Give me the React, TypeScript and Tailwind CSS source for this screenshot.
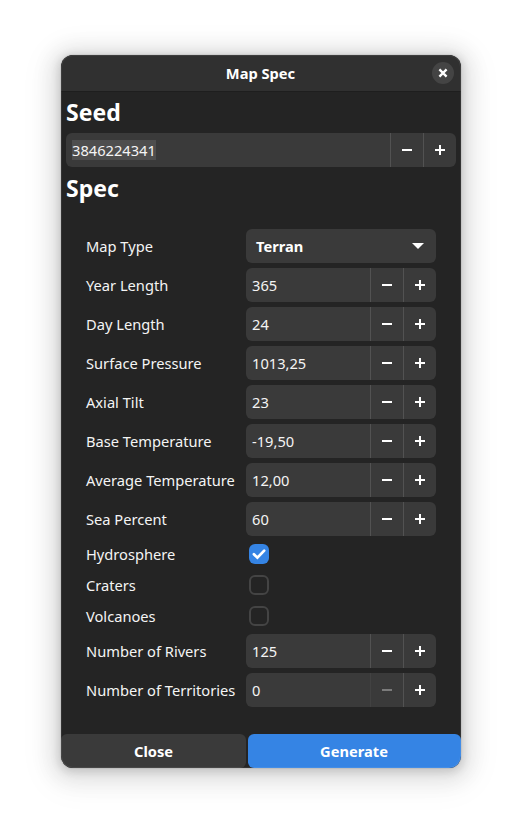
import React from "react";

function Minus() {
  return (
    <svg width="10" height="10" viewBox="0 0 10 10" fill="currentColor">
      <path d="M0 4h10v2H0z" />
    </svg>
  );
}

function Plus() {
  return (
    <svg width="10" height="10" viewBox="0 0 10 10" fill="currentColor">
      <path d="M4 0h2v4h4v2H6v4H4V6H0V4h4z" />
    </svg>
  );
}

type SpinProps = { value: string; selected?: boolean; atMin?: boolean };

function SpinButton({ value, selected, atMin }: SpinProps) {
  return (
    <div className="flex h-[34px] w-full overflow-hidden rounded-md bg-[#3a3a3a]">
      <div className="flex flex-1 items-center pl-1.5">
        <span className={selected ? "bg-[#4e4e4e] leading-5" : "leading-5"}>{value}</span>
      </div>
      <button
        aria-label="Decrease"
        className={
          atMin
            ? "flex w-[33px] items-center justify-center border-l border-[#424242] text-[#7b7b7b]"
            : "flex w-[33px] items-center justify-center border-l border-[#525252] text-white"
        }
      >
        <Minus />
      </button>
      <button
        aria-label="Increase"
        className="flex w-[33px] items-center justify-center border-l border-[#525252] text-white"
      >
        <Plus />
      </button>
    </div>
  );
}

function Check({ checked }: { checked?: boolean }) {
  return checked ? (
    <div className="ml-[3px] flex size-5 items-center justify-center rounded-md bg-[#3584e4]">
      <svg width="14" height="14" viewBox="0 0 14 14" fill="none" stroke="white" strokeWidth="2.7">
        <path d="M1.9 7.3 5.4 10.7 12.2 3.6" strokeLinejoin="miter" strokeLinecap="round" />
      </svg>
    </div>
  ) : (
    <div className="ml-[3px] size-5 rounded-md border-2 border-[#444444]" />
  );
}

function Row({ label, children }: { label: string; children: React.ReactNode }) {
  return (
    <div className="flex min-h-[26px] items-center">
      <div className="w-40 shrink-0 whitespace-nowrap">{label}</div>
      <div className="flex-1">{children}</div>
    </div>
  );
}

export default function App() {
  return (
    <div className="h-[835px] w-[522px] overflow-hidden bg-white pl-[61px] pt-[55px] font-['Noto_Sans',sans-serif] text-[14.667px] leading-5 text-[#f4f4f4]">
      <div className="relative flex h-[713px] w-[400px] flex-col overflow-hidden rounded-xl bg-[#242424] shadow-[0_2px_8px_2px_rgba(0,0,0,0.13),0_3px_20px_10px_rgba(0,0,0,0.09),0_6px_32px_16px_rgba(0,0,0,0.04),0_0_0_1px_rgba(0,0,0,0.05)]">
        <header className="grid h-[37px] shrink-0 grid-cols-[1fr_auto_1fr] items-center border-b border-[#1e1e1e] bg-[#303030] pr-[7px]">
          <span />
          <h1 className="pl-[6px] font-bold text-white">Map Spec</h1>
          <button aria-label="Close window" className="flex size-[22px] items-center justify-center justify-self-end rounded-full bg-[#444444]">
            <svg width="10" height="10" viewBox="0 0 10 10" stroke="white" strokeWidth="2.3">
              <path d="M1.4 1.4 8.6 8.6M8.6 1.4 1.4 8.6" />
            </svg>
          </button>
        </header>
        <main className="flex flex-1 flex-col px-[5px]">
          <h2 className="mt-1 h-[32px] text-[23px] leading-[32px] font-bold text-white">Seed</h2>
          <div className="mt-[5px]">
            <SpinButton value="3846224341" selected />
          </div>
          <h2 className="mt-[5px] h-[32px] text-[23px] leading-[32px] font-bold text-white">Spec</h2>
          <div className="mt-[25px] flex flex-col gap-[5px] px-5">
            <Row label="Map Type">
              <button className="flex h-[34px] w-full items-center justify-between rounded-md bg-[#3a3a3a] pr-3 pl-2.5 font-bold text-white">
                Terran
                <svg width="12" height="6" viewBox="0 0 12 6" fill="currentColor">
                  <path d="M0 0h12L6 6z" />
                </svg>
              </button>
            </Row>
            <Row label="Year Length"><SpinButton value="365" /></Row>
            <Row label="Day Length"><SpinButton value="24" /></Row>
            <Row label="Surface Pressure"><SpinButton value="1013,25" /></Row>
            <Row label="Axial Tilt"><SpinButton value="23" /></Row>
            <Row label="Base Temperature"><SpinButton value="-19,50" /></Row>
            <Row label="Average Temperature"><SpinButton value="12,00" /></Row>
            <Row label="Sea Percent"><SpinButton value="60" /></Row>
            <Row label="Hydrosphere"><Check checked /></Row>
            <Row label="Craters"><Check /></Row>
            <Row label="Volcanoes"><Check /></Row>
            <Row label="Number of Rivers"><SpinButton value="125" /></Row>
            <Row label="Number of Territories"><SpinButton value="0" atMin /></Row>
          </div>
        </main>
        <footer className="flex h-[34px] shrink-0 gap-0.5 font-bold text-white">
          <button className="w-[185px] rounded-md bg-[#3a3a3a]">Close</button>
          <button className="flex-1 rounded-md bg-[#3584e4] pr-px">Generate</button>
        </footer>
        <div className="pointer-events-none absolute inset-0 rounded-xl border border-white/7" />
      </div>
    </div>
  );
}
